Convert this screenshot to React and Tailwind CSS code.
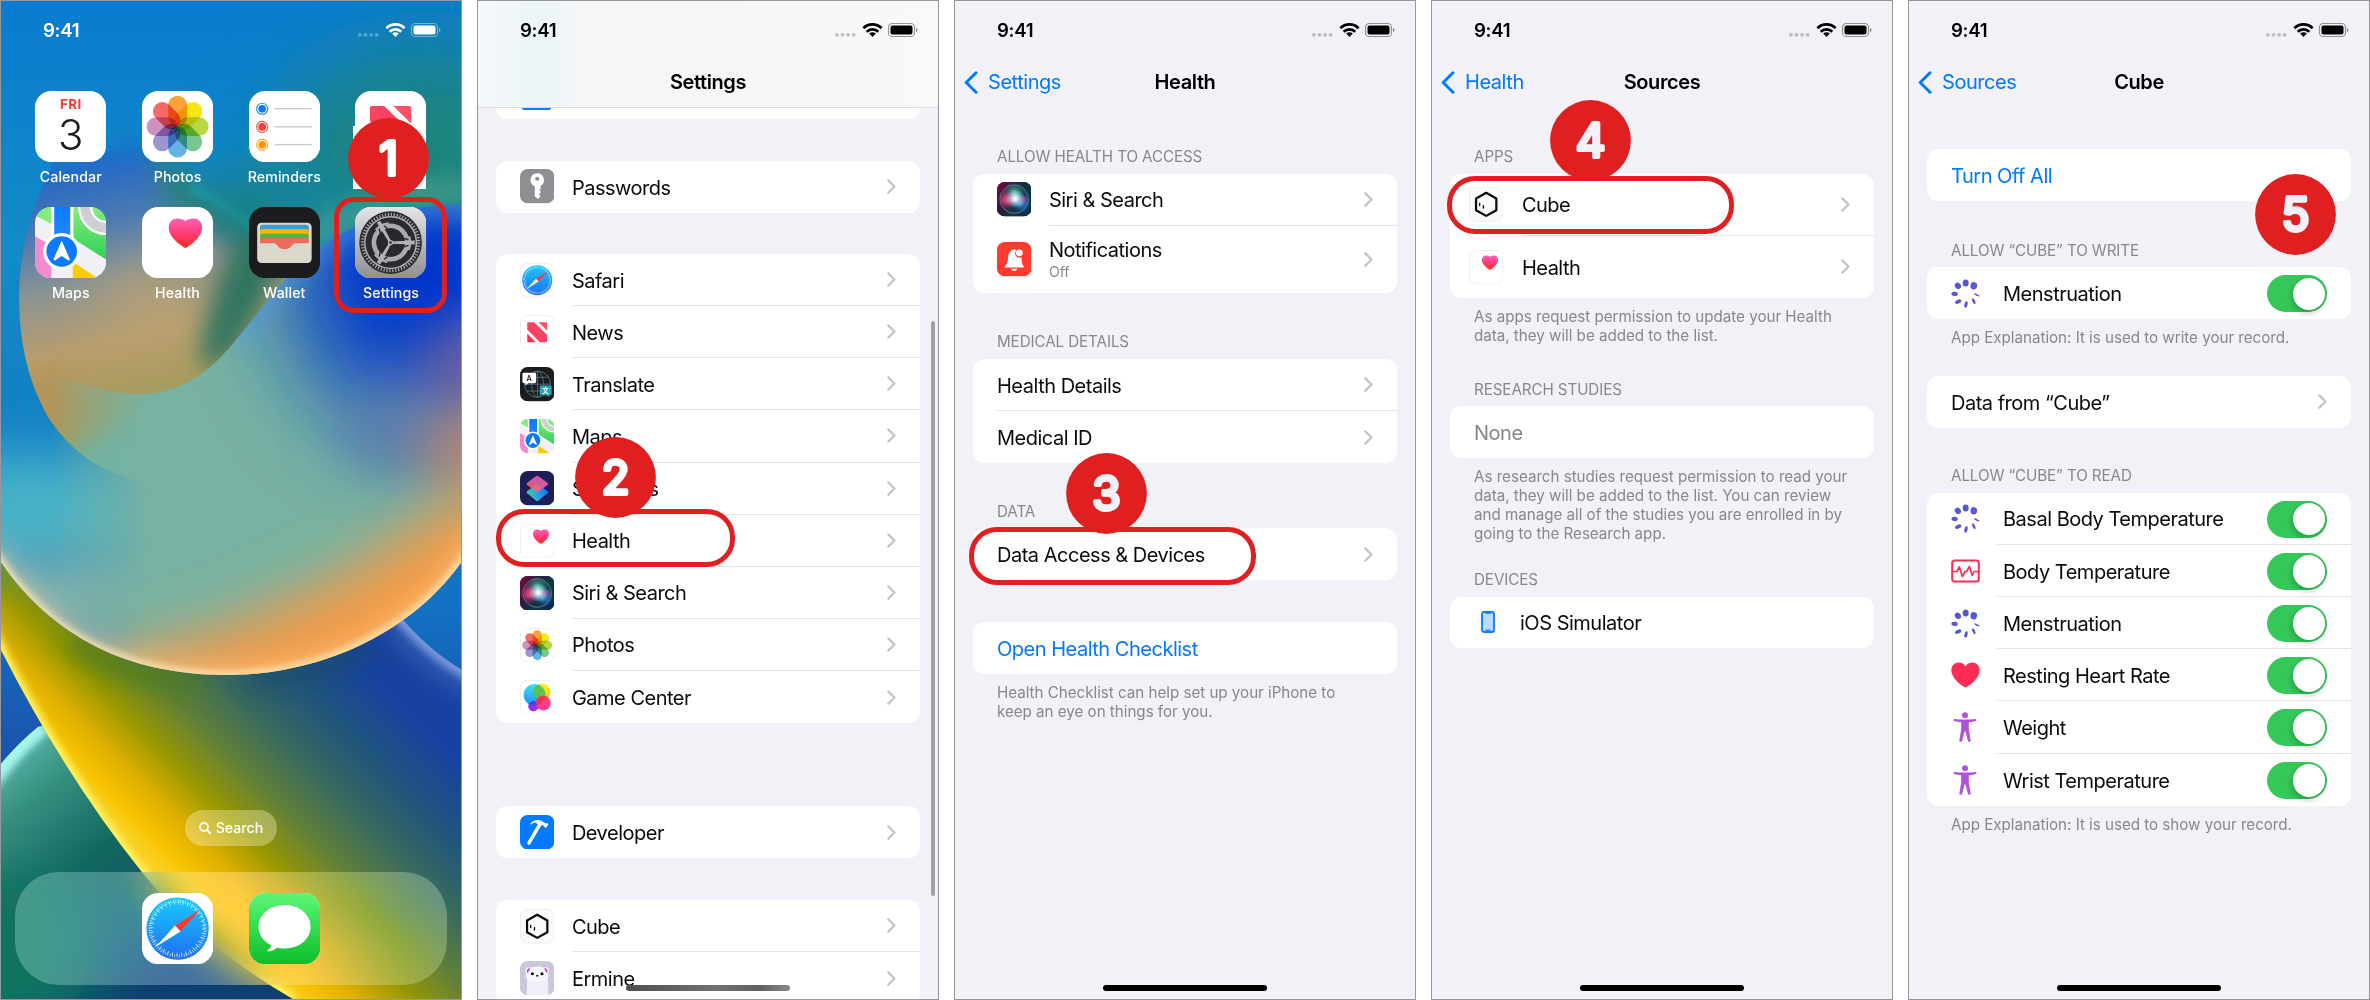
import React from "react";

/* ---------- app icons, drawn on a 100 x 100 grid ---------- */

function Tile({ children, size = "size-[34.4px]", bg = "#fff", outline = false }) {
  return (
    <svg viewBox="0 0 100 100" className={`${size} shrink-0 block`}>
      <defs>
        <clipPath id="tileClip">
          <rect width="100" height="100" rx="22.5" />
        </clipPath>
      </defs>
      <g clipPath="url(#tileClip)">
        <rect width="100" height="100" fill={bg} />
        {children}
      </g>
      {outline && <rect x="1" y="1" width="98" height="98" rx="21.5" fill="none" stroke="#e9e9eb" strokeWidth="2.4" />}
    </svg>
  );
}

const petals = ["#f99c2a", "#f8e300", "#b4d335", "#6cc287", "#57aee2", "#928fcc", "#cb8abb", "#f2605c"];

function PhotosIcon(p) {
  return (
    <Tile {...p}>
      <g className="isolate">
        {petals.map((c, i) => (
          <rect
            key={c}
            x="36.8"
            y="6.5"
            width="26.4"
            height="43.5"
            rx="13.2"
            fill={c}
            fillOpacity="0.93"
            transform={`rotate(${i * 45} 50 50)`}
            className="mix-blend-multiply"
          />
        ))}
      </g>
    </Tile>
  );
}

function NewsIcon(p) {
  return (
    <Tile {...p}>
      <path d="M24 21H41L79 58V75Q79 79 75 79H58L21 42V24Q21 21 24 21Z" fill="#fc4262" />
      <path d="M54 21H76Q79 21 79 24V46Z" fill="#fb5168" />
      <path d="M21 54L46 79H24Q21 79 21 76Z" fill="#fc2f53" />
    </Tile>
  );
}

function MapsIcon(p) {
  return (
    <Tile bg="#f1f0f5" {...p}>
      <defs>
        <linearGradient id="mapGreen" x1="0" y1="0" x2="0" y2="1">
          <stop offset="0" stopColor="#85ec7c" />
          <stop offset="1" stopColor="#2fd158" />
        </linearGradient>
        <linearGradient id="mapBlue" x1="0" y1="0" x2="0" y2="1">
          <stop offset="0" stopColor="#0a7aff" />
          <stop offset="1" stopColor="#2a8cff" />
        </linearGradient>
      </defs>
      <path d="M0 0H23V24L0 12Z" fill="#84eb7c" />
      <path d="M53 0H100V74L53 44Z" fill="url(#mapGreen)" />
      <circle cx="100" cy="0" r="29.5" fill="none" stroke="#fff" strokeWidth="20" />
      <circle cx="100" cy="0" r="29.5" fill="none" stroke="#cfced3" strokeWidth="14" />
      <path d="M0 41L23 54V100H0Z" fill="#f08bcf" />
      <path d="M53 77L88 100H53Z" fill="#fecb06" />
      <rect x="23" width="31" height="60" fill="#fff" />
      <rect x="27" width="22.5" height="60" fill="url(#mapBlue)" />
      <circle cx="37.5" cy="62.5" r="26" fill="#fff" />
      <circle cx="37.5" cy="62.5" r="21.5" fill="#0a7bff" />
      <path d="M37.5 47L49 73.5Q49 75.5 47 75L37.5 69L28 75Q26 75.5 26 73.5Z" fill="#fff" />
    </Tile>
  );
}

function HealthIcon(p) {
  return (
    <Tile {...p}>
      <defs>
        <linearGradient id="heartFill" x1="0" y1="0" x2="0" y2="1">
          <stop offset="0" stopColor="#fd62b5" />
          <stop offset="0.55" stopColor="#fd3a71" />
          <stop offset="1" stopColor="#ff2a17" />
        </linearGradient>
      </defs>
      <path
        d="M61 57.5C57 56 37.5 43 37.5 29C37.5 21 43 16.3 49.5 16.3C54.5 16.3 59 17.5 61 20C63 17.5 67.5 16.3 72.5 16.3C79 16.3 84.5 21 84.5 29C84.5 43 65 56 61 57.5Z"
        fill="url(#heartFill)"
      />
    </Tile>
  );
}

function SafariIcon(p) {
  return (
    <Tile {...p}>
      <defs>
        <linearGradient id="safari" x1="0" y1="0" x2="0" y2="1">
          <stop offset="0" stopColor="#19cbfb" />
          <stop offset="1" stopColor="#1e6ef2" />
        </linearGradient>
      </defs>
      <circle cx="50" cy="50" r="43.8" fill="url(#safari)" />
      <circle cx="50" cy="50" r="38.5" fill="none" stroke="#fff" strokeOpacity="0.75" strokeWidth="4.5" strokeDasharray="1.1 2.26" />
      <circle cx="50" cy="50" r="36.2" fill="none" stroke="#fff" strokeOpacity="0.75" strokeWidth="5" strokeDasharray="1.1 5.218" />
      <path d="M81 24L46.4 45.6L54 54Z" fill="#ff3b30" />
      <path d="M19 76L46.4 45.6L54 54Z" fill="#fff" />
    </Tile>
  );
}

function MessagesIcon(p) {
  return (
    <Tile {...p}>
      <defs>
        <linearGradient id="msg" x1="0" y1="0" x2="0" y2="1">
          <stop offset="0" stopColor="#5df777" />
          <stop offset="1" stopColor="#0cbd2a" />
        </linearGradient>
      </defs>
      <rect width="100" height="100" fill="url(#msg)" />
      <path d="M50 17C70.5 17 86.5 30 86.5 47.5C86.5 65 70.5 78 50 78C46 78 42.5 77.5 39.5 76.8C35.5 80 31 82 26.5 82C25.5 82 25 81.5 26 80.5C29 78.5 31 76 31.2 73.5C20.5 68.5 13.5 59 13.5 47.5C13.5 30 29.5 17 50 17Z" fill="#fff" />
    </Tile>
  );
}

function CalendarIcon() {
  return (
    <div className="flex size-[71px] flex-col items-center rounded-[16px] bg-white">
      <div className="mt-[5px] text-[13.5px] leading-[17px] font-bold tracking-[0.3px] text-[#fd3b30]">FRI</div>
      <div className="text-[42px] leading-[44px] font-light text-[#1d1d1f]">3</div>
    </div>
  );
}

function RemindersIcon(p) {
  const dots = [
    [25, "#0a7bff"],
    [50.5, "#fd3b30"],
    [75.5, "#fd9501"],
  ];
  return (
    <Tile {...p}>
      {dots.map(([y, c]) => (
        <g key={c}>
          <circle cx="18.5" cy={y} r="7.8" fill="none" stroke={c} strokeWidth="1.7" strokeOpacity="0.85" />
          <circle cx="18.5" cy={y} r="5.4" fill={c} />
          <rect x="36" y={y - 1.2} width="52" height="2" fill="#c9c9cf" />
        </g>
      ))}
    </Tile>
  );
}

function WalletIcon(p) {
  return (
    <Tile bg="#1c1c1e" {...p}>
      <rect x="11.5" y="22" width="76.5" height="56.5" rx="6" fill="#dbd8cc" />
      <rect x="15.5" y="25" width="68.5" height="14" rx="4" fill="#3e9bd2" />
      <rect x="15.5" y="31" width="68.5" height="12" rx="4" fill="#fcb00b" />
      <rect x="15.5" y="37.5" width="68.5" height="12" rx="4" fill="#4fb749" />
      <path d="M15.5 47Q15.5 43.5 19.5 43.5H80Q84 43.5 84 47V51H65C60 51 60 59.5 50 59.5C40 59.5 40 51 35 51H15.5Z" fill="#ee6a5c" />
    </Tile>
  );
}

function SettingsIcon(p) {
  return (
    <Tile {...p}>
      <defs>
        <linearGradient id="gearBg" x1="0" y1="0" x2="0" y2="1">
          <stop offset="0" stopColor="#e3e3e8" />
          <stop offset="1" stopColor="#8f8f94" />
        </linearGradient>
      </defs>
      <rect width="100" height="100" fill="url(#gearBg)" />
      <circle cx="50" cy="50" r="44" fill="#2b2b2d" />
      <circle cx="50" cy="50" r="39.5" fill="none" stroke="#b2b2b7" strokeWidth="4.5" strokeDasharray="1.6 2.536" />
      <circle cx="50" cy="50" r="36.2" fill="none" stroke="#b2b2b7" strokeWidth="2" />
      <circle cx="50" cy="50" r="24.5" fill="none" stroke="#a9a9ae" strokeWidth="9" />
      <circle cx="50" cy="50" r="28.3" fill="none" stroke="#2b2b2d" strokeWidth="3.2" strokeDasharray="38 21.27" strokeDashoffset="-11" />
      <circle cx="50" cy="50" r="19.8" fill="#29292b" />
      {[0, 120, 240].map((a) => (
        <g key={a} transform={`rotate(${a} 50 50)`}>
          <path d="M50 48.4L84 47.2V52.8L50 51.6Z" fill="#b2b2b7" />
          <path d="M69 44L75 46M69 56L75 54" stroke="#2b2b2d" strokeWidth="2" />
        </g>
      ))}
      <circle cx="50" cy="50" r="3.8" fill="#b2b2b7" />
      <circle cx="50" cy="50" r="1.8" fill="#2b2b2d" />
    </Tile>
  );
}

function KeyIcon() {
  return (
    <Tile bg="#8e8e93">
      <path
        fillRule="evenodd"
        fill="#fff"
        d="M50 12A20 20 0 0 0 43 50.5V79L52 87L60 79L55 73.5L61 67L56 61L60 57.5V49A20 20 0 0 0 50 12ZM50 22.5A6 6 0 1 1 50 34.5A6 6 0 1 1 50 22.5Z"
      />
    </Tile>
  );
}

function TranslateIcon() {
  return (
    <Tile bg="#1c1c1e">
      <g fill="none" stroke="#4f8490" strokeWidth="2.2">
        <circle cx="51" cy="50" r="38" />
        <ellipse cx="51" cy="50" rx="17" ry="38" />
        <path d="M51 12V88M13 50H89M19 30H83M19 70H83" />
      </g>
      <path d="M12 17H43Q47 17 47 21V43Q47 47 43 47H24L16 54V47H12Q7 47 7 43V21Q7 17 12 17Z" fill="#fff" />
      <path d="M61 54H88Q92 54 92 58V78Q92 82 88 82H85V88L78 82H61Q57 82 57 78V58Q57 54 61 54Z" fill="#2ba1b4" />
      <text x="26.5" y="40" textAnchor="middle" fontSize="21" fontWeight="600" fill="#1c1c1e" fontFamily="Inter">A</text>
      <text x="74.5" y="75.5" textAnchor="middle" fontSize="19" fontWeight="700" fill="#fff" fontFamily="Noto Sans CJK SC">文</text>
    </Tile>
  );
}

function ShortcutsIcon() {
  return (
    <Tile bg="#1b1e59">
      <defs>
        <linearGradient id="scTop" x1="0.2" y1="1" x2="0.7" y2="0">
          <stop offset="0" stopColor="#fb6a5c" />
          <stop offset="1" stopColor="#e85ad0" />
        </linearGradient>
        <linearGradient id="scBottom" x1="0" y1="0.7" x2="1" y2="0.4">
          <stop offset="0" stopColor="#45d29a" />
          <stop offset="0.6" stopColor="#2e93f0" />
          <stop offset="1" stopColor="#0a74f5" />
        </linearGradient>
      </defs>
      <path d="M21 58L46 41Q50 39 54 41L80 58Q84 61.5 80 65L54 86Q50 89 46 86L21 65Q17 61.5 21 58Z" fill="url(#scBottom)" />
      <path d="M21 34L46 15Q50 12 54 15L80 34Q84 38 80 41L54 59Q50 61 46 59L21 41Q17 38 21 34Z" fill="url(#scTop)" fillOpacity="0.88" />
    </Tile>
  );
}

function SiriIcon() {
  return (
    <Tile bg="#171a2c">
      <defs>
        <linearGradient id="siriBg" x1="0" y1="0.2" x2="1" y2="0.8">
          <stop offset="0" stopColor="#6e0f35" />
          <stop offset="0.3" stopColor="#35143f" />
          <stop offset="0.6" stopColor="#0d3640" />
          <stop offset="1" stopColor="#0a2c52" />
        </linearGradient>
        <radialGradient id="siriGlow">
          <stop offset="0" stopColor="#fff" />
          <stop offset="0.25" stopColor="#e6f4fb" stopOpacity="0.9" />
          <stop offset="1" stopColor="#7fd6e0" stopOpacity="0" />
        </radialGradient>
        <radialGradient id="siriPink">
          <stop offset="0" stopColor="#f0508a" />
          <stop offset="1" stopColor="#c0306c" stopOpacity="0" />
        </radialGradient>
        <radialGradient id="siriGreen">
          <stop offset="0" stopColor="#38c79a" />
          <stop offset="1" stopColor="#1a9a7a" stopOpacity="0" />
        </radialGradient>
        <radialGradient id="siriBlue">
          <stop offset="0" stopColor="#44a8ff" />
          <stop offset="1" stopColor="#1f55c8" stopOpacity="0" />
        </radialGradient>
      </defs>
      <rect width="100" height="100" fill="url(#siriBg)" />
      <circle cx="50" cy="32" r="34" fill="url(#siriGreen)" />
      <circle cx="30" cy="52" r="30" fill="url(#siriPink)" />
      <circle cx="70" cy="60" r="30" fill="url(#siriBlue)" />
      <path d="M14 52C18 30 36 34 50 50S84 66 86 50S66 42 50 52S16 74 14 52Z" fill="#e2477f" fillOpacity="0.45" />
      <circle cx="53" cy="48" r="28" fill="url(#siriGlow)" />
      <path d="M45 48L78 80L52 56Z" fill="#fff" fillOpacity="0.7" />
      <circle cx="50" cy="50" r="41.5" fill="none" stroke="#6fb5b8" strokeOpacity="0.7" strokeWidth="2.2" />
      <circle cx="51" cy="52" r="37.5" fill="none" stroke="#b36aa0" strokeOpacity="0.45" strokeWidth="1.8" />
    </Tile>
  );
}

function GameCenterIcon() {
  return (
    <Tile outline>
      <defs>
        <linearGradient id="gcBlue" x1="0" y1="0" x2="0" y2="1">
          <stop offset="0" stopColor="#3ee0fb" />
          <stop offset="1" stopColor="#1f8ef5" />
        </linearGradient>
        <linearGradient id="gcYellow" x1="0" y1="0" x2="0" y2="1">
          <stop offset="0" stopColor="#fdf21c" />
          <stop offset="1" stopColor="#fbc108" />
        </linearGradient>
        <linearGradient id="gcPink" x1="0" y1="0" x2="0" y2="1">
          <stop offset="0" stopColor="#fb3f5c" />
          <stop offset="1" stopColor="#fd2f93" />
        </linearGradient>
        <clipPath id="gcClip">
          <circle cx="42" cy="43" r="31.5" />
        </clipPath>
      </defs>
      <circle cx="39" cy="76" r="15" fill="#9a2cf5" />
      <circle cx="64" cy="35" r="25" fill="url(#gcYellow)" />
      <circle cx="42" cy="43" r="31.5" fill="url(#gcBlue)" />
      <g clipPath="url(#gcClip)">
        <circle cx="64" cy="35" r="25" fill="#5cc04e" />
        <circle cx="39" cy="76" r="15" fill="#4a3df0" />
      </g>
      <circle cx="68" cy="67" r="21.5" fill="url(#gcPink)" fillOpacity="0.96" />
      <g clipPath="url(#gcClip)">
        <circle cx="68" cy="67" r="21.5" fill="#e8294a" fillOpacity="0.6" />
      </g>
    </Tile>
  );
}

function HammerIcon() {
  return (
    <Tile bg="#007aff">
      <path
        fill="#fff"
        d="M30 25C37 15 50 12 60 16L71 21.5C74 24 76 25 81 24L82 28L76 37L70 35L67.5 30C65 28 63 29 61.5 31.5L30 84Q27 88 23.5 85.5Q19.5 83 21.5 79L51.5 27.5C47 20.5 38 21 32.5 28Z"
      />
    </Tile>
  );
}

function CubeIcon() {
  return (
    <Tile bg="#fafafa" outline>
      <path d="M50 17L79.5 33.5V67.5L50 84L20.5 67.5V33.5Z" fill="none" stroke="#0a0a0a" strokeWidth="6.5" strokeLinejoin="round" />
      <path d="M31 48V54M42 54V61" stroke="#0a0a0a" strokeWidth="4" strokeLinecap="round" />
    </Tile>
  );
}

function ErmineIcon() {
  return (
    <Tile bg="#cbc6dc">
      <path d="M19 100L21 50H81L83 100Z" fill="#f0eef6" />
      <ellipse cx="25" cy="28" rx="9" ry="10" fill="#f6f4fa" />
      <ellipse cx="75" cy="28" rx="9" ry="10" fill="#f6f4fa" />
      <path d="M50 16C70 16 80 26 82 40C83 56 70 60 50 60C30 60 17 56 18 40C20 26 30 16 50 16Z" fill="#f8f7fc" />
      <path d="M21 35Q17 21 30 21L24 33Z" fill="#a44de0" />
      <path d="M79 35Q83 21 70 21L76 33Z" fill="#a44de0" />
      <circle cx="36" cy="37" r="4.5" fill="#111" />
      <circle cx="64" cy="37" r="4.5" fill="#111" />
      <ellipse cx="50" cy="43" rx="3.5" ry="2.8" fill="#222" />
      <path d="M12 42H19M12 48H20M81 42H88M80 48H88" stroke="#f2f0f8" strokeWidth="1.5" />
    </Tile>
  );
}

function BellIcon() {
  return (
    <Tile bg="#ff3b30">
      <path d="M22 71Q31 65 32 47C32.5 31 39 23 50 21Q55 21 56 24Q50 31 54 39Q60 48 71 45Q71 63 78 71Q79 74 75 74H25Q21 74 22 71Z" fill="#fff" />
      <path d="M41 77.5H59Q56 84 50 84Q44 84 41 77.5Z" fill="#fff" />
      <circle cx="65" cy="31.500" r="10" fill="#fff" />
    </Tile>
  );
}

/* ---------- health category glyphs ---------- */

function CycleGlyph() {
  const drops = [
    [14.7, 4, 3, 3.6, 0],
    [22.8, 6.8, 3.3, 3.7, 10],
    [25.8, 15.9, 3, 0.8, 25],
    [22.8, 22.3, 1.3, 3.2, -25],
    [15, 25.5, 1.6, 3.2, 12],
    [7.2, 22.6, 3.3, 1.9, -25],
    [3.6, 14.9, 3.2, 2.2, 5],
    [6.9, 6.8, 2.9, 3.4, -35],
  ];
  return (
    <svg viewBox="0 0 29 29" className="size-[29px] overflow-visible">
      {drops.map(([x, y, rx, ry, a]) => (
        <ellipse key={x + "-" + y} cx={x} cy={y} rx={rx} ry={ry} fill="#5856d6" transform={`rotate(${a} ${x} ${y})`} />
      ))}
    </svg>
  );
}

function VitalsGlyph() {
  return (
    <svg viewBox="0 0 29 24" className="h-[24px] w-[29px]" fill="none" stroke="#ff2d55">
      <rect x="1.2" y="1.5" width="26.6" height="21" rx="2.5" strokeWidth="2" />
      <path d="M2 12.5H6L8.3 8L11.3 17.5L14 12.5H15.5L18.5 7.5L21.2 16.5L23 12.5H27" strokeWidth="1.7" strokeLinejoin="round" />
    </svg>
  );
}

function HeartGlyph() {
  return (
    <svg viewBox="0 0 29 26" className="h-[26px] w-[29px]">
      <path d="M14.5 25.5C12.5 25 0.4 17 0.4 8.2C0.4 3.5 3.7 0.5 7.7 0.5C10.7 0.5 13.2 2 14.5 4.6C15.8 2 18.3 0.5 21.3 0.5C25.3 0.5 28.6 3.5 28.6 8.2C28.6 17 16.5 25 14.5 25.5Z" fill="#ff2d55" />
    </svg>
  );
}

function BodyGlyph() {
  return (
    <svg viewBox="0 0 24 30" className="h-[30px] w-[24px]" fill="#af52de">
      <circle cx="12" cy="3.2" r="3" />
      <path d="M1.3 6.9Q12 8.3 22.7 6.9Q23.8 7.2 23.4 8.7Q20 10 15.8 10.3V17.5L17.7 28.5Q17.7 30 15.7 29.8L15 29.2L12.5 19.5H11.5L9 29.2L8.3 29.8Q6.3 30 6.3 28.5L8.2 17.5V10.3Q4 10 0.6 8.7Q0.2 7.2 1.3 6.9Z" />
    </svg>
  );
}

function PhoneGlyph() {
  return (
    <svg viewBox="0 0 14 22" className="h-[22px] w-[14px]">
      <rect x="1" y="1" width="12" height="20" rx="2" fill="#b9dbff" stroke="#0a7bff" strokeWidth="1.8" />
      <path d="M4.5 2.2H9.5M4.5 19.2H9.5" stroke="#0a7bff" strokeWidth="1.3" />
    </svg>
  );
}

/* ---------- shared chrome ---------- */

function Chevron() {
  return (
    <svg viewBox="0 0 9 15" className="h-[15px] w-[9px] shrink-0" fill="none" stroke="#c4c4c7" strokeWidth="2.3" strokeLinecap="round" strokeLinejoin="round">
      <path d="M1.3 1.4L7.5 7.5L1.3 13.6" />
    </svg>
  );
}

function StatusBar({ light }) {
  const c = light ? "#fff" : "#000";
  return (
    <div className={light ? "flex h-[58px] items-center text-white" : "flex h-[58px] items-center text-black"}>
      <span className="ml-[42px] text-[18.6px] leading-[20px] font-semibold tracking-[-0.3px]">9:41</span>
      <svg viewBox="0 0 83 16" className="mr-[20px] ml-auto h-[16px] w-[83px]">
        {[1.9, 7.5, 13.1, 18.7].map((x) => (
          <circle key={x} cx={x} cy="12.8" r="1.9" fill={light ? "#fff" : "#000"} fillOpacity={light ? 0.3 : 0.22} />
        ))}
        <g fill="none" stroke={c} strokeWidth="2.7">
          <path d="M28.4 6.2C33.5 1.1 41.5 1.1 46.6 6.2" />
          <path d="M31.7 9.7C34.9 6.5 40.1 6.5 43.3 9.7" />
        </g>
        <path d="M34.2 11.5C36.2 9.8 38.8 9.8 40.8 11.5L37.5 15Z" fill={c} />
        <rect x="53.5" y="1.5" width="26" height="13" rx="3.8" fill="none" stroke={c} strokeOpacity="0.4" strokeWidth="1.2" />
        <rect x="55.5" y="3.5" width="22" height="9" rx="2" fill={c} />
        <path d="M81 6C83 6.7 83 9.3 81 10Z" fill={c} fillOpacity="0.45" />
      </svg>
    </div>
  );
}

function NavBar({ back, title }) {
  return (
    <div className="grid h-[46px] grid-cols-[1fr_auto_1fr] items-center text-[20px] leading-[24px]">
      <div className="flex items-center text-[#007aff]">
        {back && (
          <>
            <svg viewBox="0 0 14 23" className="ml-[9px] h-[23px] w-[14px]" fill="none" stroke="#007aff" strokeWidth="3" strokeLinecap="round" strokeLinejoin="round">
              <path d="M12 1.8L2.2 11.500L12 21.2" />
            </svg>
            <span className="ml-[10px] tracking-[-0.45px]">{back}</span>
          </>
        )}
      </div>
      <div className="font-semibold tracking-[-0.4px] text-black">{title}</div>
      <div />
    </div>
  );
}

function HomeIndicator() {
  return <div className="absolute bottom-[8px] left-[148px] h-[6px] w-[164px] rounded-full bg-black" />;
}

function Panel({ children }) {
  return (
    <section className="relative flex h-[1000px] w-[462px] shrink-0 flex-col overflow-hidden border border-[#98989c] bg-[#f2f1f7]">
      {children}
    </section>
  );
}

function Card({ className = "", children }) {
  return <div className={`mx-[18px] shrink-0 overflow-hidden rounded-[11.5px] bg-white ${className}`}>{children}</div>;
}

function GroupLabel({ className = "", children }) {
  return <div className={`ml-[42px] h-[19px] shrink-0 text-[15.2px] leading-[19px] tracking-[-0.1px] text-[#87878c] ${className}`}>{children}</div>;
}

function GroupNote({ className = "", children }) {
  return <div className={`ml-[42px] shrink-0 text-[15.2px] leading-[19px] tracking-[-0.03px] whitespace-pre text-[#87878c] ${className}`}>{children}</div>;
}

const label = "pt-[2px] text-[20px] leading-[24px] tracking-[-0.49px]";

function IconRow({ icon, text, sub, last }) {
  return (
    <div className={sub ? "flex h-[67.4px] items-center pl-[24px]" : "flex h-[52.13px] items-center pl-[24px]"}>
      {icon}
      <div
        className={
          last
            ? "ml-[17.5px] flex h-full flex-1 items-center pr-[24px]"
            : "ml-[17.5px] flex h-full flex-1 items-center border-b border-[#e3e3e6] pr-[24px]"
        }
      >
        <div className="flex-1">
          <div className={`${label} text-[#0b0b0c]`}>{text}</div>
          {sub && <div className="text-[14.2px] leading-[20px] tracking-[-0.1px] text-[#8a8a8e]">{sub}</div>}
        </div>
        <Chevron />
      </div>
    </div>
  );
}

function TextRow({ text, tone = "text-[#0b0b0c]", chevron, divider }) {
  return (
    <div className="h-[52.13px] pl-[24px]">
      <div className={divider ? "flex h-full items-center justify-between border-b border-[#e3e3e6] pr-[24px]" : "flex h-full items-center justify-between pr-[24px]"}>
        <span className={`${label} ${tone}`}>{text}</span>
        {chevron && <Chevron />}
      </div>
    </div>
  );
}

function Switch() {
  return (
    <div className="mt-[1.5px] flex h-[37px] w-[60.5px] shrink-0 items-center justify-end rounded-full bg-[#34c759] pr-[2px]">
      <div className="size-[32.5px] rounded-full bg-white shadow-[-1px_3px_6px_rgba(0,0,0,0.22)]" />
    </div>
  );
}

function SwitchRow({ glyph, text, last }) {
  return (
    <div className="flex h-[52.13px] items-center pl-[23px]">
      <div className="flex w-[30px] justify-center">{glyph}</div>
      <div
        className={
          last
            ? "ml-[17px] flex h-full flex-1 items-center justify-between pr-[24px] pl-[6px]"
            : "ml-[17px] flex h-full flex-1 items-center justify-between border-b border-[#e3e3e6] pr-[24px] pl-[6px]"
        }
      >
        <span className={`${label} text-[#0b0b0c]`}>{text}</span>
        <Switch />
      </div>
    </div>
  );
}

/* Numbered step marker: disc with a round-cornered numeral */
function Step({ n, place, fill }) {
  return (
    <svg viewBox="0 0 81 81" className={`absolute size-[81px] ${place}`}>
      <circle cx="40.5" cy="40.5" r="40.4" fill="#e02020" />
      <text x="40.5" y="57.2" textAnchor="middle" fontFamily="Inter" fontWeight="400" fontSize="46" fill={fill} stroke={fill} strokeWidth="4" strokeLinejoin="round" strokeLinecap="round">
        {n}
      </text>
    </svg>
  );
}

/* ---------- home screen ---------- */

function Wallpaper() {
  const arc = "M-10 -10H480V530C440 615 340 675 225 675C120 675 40 630 -10 545Z";
  const rim = "M-10 545C40 630 120 675 225 675C340 675 440 615 480 530";
  const swirl = "M480 204C420 203 370 214 325 244C285 272 262 310 238 337C210 375 175 394 143 394C110 394 85 384 55 376L-10 360V720H480Z";
  return (
    <svg viewBox="1 1 460 998" className="absolute inset-0 h-full w-full" preserveAspectRatio="none">
      <defs>
        <filter id="b60" filterUnits="userSpaceOnUse" x="-200" y="-200" width="900" height="1400"><feGaussianBlur stdDeviation="45" /></filter>
        <filter id="b30" filterUnits="userSpaceOnUse" x="-200" y="-200" width="900" height="1400"><feGaussianBlur stdDeviation="28" /></filter>
        <filter id="b12" filterUnits="userSpaceOnUse" x="-200" y="-200" width="900" height="1400"><feGaussianBlur stdDeviation="12" /></filter>
        <filter id="b4" filterUnits="userSpaceOnUse" x="-200" y="-200" width="900" height="1400"><feGaussianBlur stdDeviation="3.5" /></filter>
        <clipPath id="arcClip"><path d={arc} /></clipPath>
        <clipPath id="swirlClip"><path d={swirl} /></clipPath>
        <clipPath id="ballClip"><path d="M-10 778Q12 748 38 727L60 720L320 1010H-10Z" /></clipPath>
        <clipPath id="bandClip"><path d="M-10 628Q60 770 142 872Q200 945 293 999H480V680Q430 655 395 610L200 540H-10Z" /></clipPath>
        <clipPath id="tailClip"><path d="M100 80C75 115 62 143 53 163C32 205 19 250 19 300C20 350 30 385 50 420C78 460 110 475 150 484L300 500V80Z" /></clipPath>
        <linearGradient id="sky" gradientUnits="userSpaceOnUse" x1="0" y1="0" x2="0" y2="1000">
          <stop offset="0" stopColor="#0a7bcf" />
          <stop offset="0.25" stopColor="#128bc6" />
          <stop offset="0.42" stopColor="#1180c4" />
          <stop offset="0.6" stopColor="#1372c2" />
          <stop offset="0.76" stopColor="#1b52ac" />
        </linearGradient>
        <linearGradient id="band" gradientUnits="userSpaceOnUse" x1="100" y1="807" x2="301.5" y2="605.5">
          <stop offset="0" stopColor="#f9d020" />
          <stop offset="0.06" stopColor="#f7c200" />
          <stop offset="0.16" stopColor="#dfb000" />
          <stop offset="0.3" stopColor="#959700" />
          <stop offset="0.45" stopColor="#62803a" />
          <stop offset="0.62" stopColor="#38695e" />
          <stop offset="0.8" stopColor="#20557c" />
          <stop offset="1" stopColor="#17429f" />
        </linearGradient>
        <linearGradient id="ball" gradientUnits="userSpaceOnUse" x1="10" y1="740" x2="190" y2="960">
          <stop offset="0" stopColor="#5cb8ac" />
          <stop offset="0.22" stopColor="#358f80" />
          <stop offset="0.5" stopColor="#12685f" />
          <stop offset="0.75" stopColor="#11586a" />
          <stop offset="1" stopColor="#0f3f70" />
        </linearGradient>
        <linearGradient id="fadeIn" gradientUnits="userSpaceOnUse" x1="50" y1="0" x2="150" y2="0">
          <stop offset="0" stopColor="#000" />
          <stop offset="1" stopColor="#fff" />
        </linearGradient>
        <mask id="leftFade" maskUnits="userSpaceOnUse" x="0" y="0" width="480" height="1000">
          <rect width="480" height="1000" fill="url(#fadeIn)" />
        </mask>
        <mask id="tailFade" maskUnits="userSpaceOnUse" x="0" y="0" width="480" height="1000">
          <path d="M-50 185L150 145Q210 190 240 225L300 260V560H-50Z" fill="#fff" filter="url(#b12)" />
        </mask>
        <linearGradient id="tailFill" gradientUnits="userSpaceOnUse" x1="75" y1="165" x2="130" y2="395">
          <stop offset="0" stopColor="#2266c8" />
          <stop offset="0.25" stopColor="#4a7ab2" />
          <stop offset="0.5" stopColor="#8c9492" />
          <stop offset="0.76" stopColor="#b99e6e" />
          <stop offset="1" stopColor="#a99a5c" />
        </linearGradient>
      </defs>

      <rect width="470" height="1000" fill="url(#sky)" />

      <g clipPath="url(#ballClip)">
        <rect x="-10" y="700" width="400" height="310" fill="url(#ball)" />
        <ellipse cx="10" cy="960" rx="80" ry="70" fill="#0c7560" filter="url(#b30)" />
        <path d="M-10 780Q12 748 42 724" fill="none" stroke="#a6f5ee" strokeWidth="22" filter="url(#b4)" />
      </g>

      <g clipPath="url(#bandClip)">
        <rect x="-10" y="500" width="500" height="510" fill="url(#band)" />
        <ellipse cx="10" cy="560" rx="50" ry="26" fill="#6e9438" filter="url(#b12)" />
        <path d="M70 640Q120 675 200 685" fill="none" stroke="#4b7a18" strokeWidth="18" filter="url(#b12)" />
        <path d="M250 680Q320 672 370 645" fill="none" stroke="#1f4c66" strokeWidth="16" filter="url(#b12)" />
        <path d="M-10 628Q60 770 142 872Q200 945 293 999" fill="none" stroke="#fff46a" strokeWidth="10" filter="url(#b4)" />
        <path d="M480 680Q430 655 395 610" fill="none" stroke="#a9bff2" strokeWidth="13" filter="url(#b4)" />
        <path d="M480 680Q430 655 395 610" fill="none" stroke="#4a70c4" strokeWidth="34" strokeOpacity="0.6" filter="url(#b12)" />
      </g>

      <g clipPath="url(#arcClip)">
        <rect width="470" height="700" fill="url(#sky)" />
        <ellipse cx="430" cy="150" rx="150" ry="100" fill="#1c837c" filter="url(#b60)" />
        <ellipse cx="250" cy="215" rx="60" ry="40" fill="#1f8080" filter="url(#b30)" />
        <ellipse cx="30" cy="510" rx="150" ry="56" fill="#48b4c8" filter="url(#b30)" />
        <ellipse cx="70" cy="600" rx="150" ry="40" fill="#8ab8ac" filter="url(#b30)" />

        <g mask="url(#tailFade)">
          <g clipPath="url(#tailClip)">
            <rect width="320" height="510" fill="url(#tailFill)" />
            <path d="M150 130L280 190V270Q210 240 165 200Z" fill="#2b807c" filter="url(#b12)" />
            <ellipse cx="244" cy="285" rx="26" ry="90" fill="#2f7560" filter="url(#b12)" transform="rotate(24 244 285)" />
            <path d="M190 188C215 196 240 212 262 236" fill="none" stroke="#1fa898" strokeWidth="8" filter="url(#b4)" />
            <ellipse cx="150" cy="305" rx="40" ry="30" fill="#bba272" filter="url(#b30)" />
            <ellipse cx="50" cy="395" rx="28" ry="30" fill="#b3945a" filter="url(#b12)" />
            <path d="M60 460L170 395V500H60Z" fill="#6cb3a4" filter="url(#b12)" />
          </g>
        </g>

        <path d="M470 190C410 190 360 205 310 240" fill="none" stroke="#5fae88" strokeWidth="22" strokeOpacity="0.6" filter="url(#b12)" />

        <g mask="url(#leftFade)">
          <g clipPath="url(#swirlClip)">
            <rect y="190" width="480" height="500" fill="#78b2a2" />
            <path d="M270 300L330 200H500V400L400 440L330 400Z" fill="#1750c4" filter="url(#b60)" />
            <path d="M330 270L370 210H500V320L390 340Z" fill="#0036cc" filter="url(#b30)" />
            <ellipse cx="400" cy="430" rx="60" ry="40" fill="#5c7fae" filter="url(#b30)" />
            <ellipse cx="490" cy="365" rx="70" ry="40" fill="#6e56a0" filter="url(#b30)" />
            <ellipse cx="490" cy="450" rx="70" ry="45" fill="#b87f74" filter="url(#b30)" />
            <path d="M480 203C420 203 370 214 325 244C285 272 262 310 238 337" fill="none" stroke="#4b93f5" strokeWidth="12" strokeOpacity="0.8" filter="url(#b12)" />
          </g>
        </g>
        <path d="M90 720L110 660L230 625L340 575L500 470V740H90Z" fill="#ee9c4c" filter="url(#b30)" />
        <path d="M210 720L240 670L340 635L430 570L500 500V740H210Z" fill="#f59b45" filter="url(#b12)" />
        <path d={rim} fill="none" stroke="#ffd49a" strokeWidth="18" strokeOpacity="0.5" filter="url(#b12)" />
        <path d={rim} fill="none" stroke="#ffe7b4" strokeWidth="7" filter="url(#b4)" />
      </g>
    </svg>
  );
}

const big = "size-[71.2px]";

function HomeApp({ icon, name }) {
  return (
    <div className="flex w-[106.6px] flex-col items-center">
      {icon}
      <div className="mt-[5.5px] h-[18px] text-[14.2px] leading-[18px] font-medium tracking-[0.1px] text-white">{name}</div>
    </div>
  );
}

function HomeScreen() {
  return (
    <Panel>
      <Wallpaper />
      <div className="relative flex h-full flex-col">
        <StatusBar light />
        <div className="mt-[32px] ml-[16.5px] grid w-[427px] grid-cols-4 gap-y-[21.5px]">
          <HomeApp icon={<CalendarIcon />} name="Calendar" />
          <HomeApp icon={<PhotosIcon size={big} />} name="Photos" />
          <HomeApp icon={<RemindersIcon size={big} />} name="Reminders" />
          <HomeApp icon={<NewsIcon size={big} />} />
          <HomeApp icon={<MapsIcon size={big} />} name="Maps" />
          <HomeApp icon={<HealthIcon size={big} />} name="Health" />
          <HomeApp icon={<WalletIcon size={big} />} name="Wallet" />
          <HomeApp icon={<SettingsIcon size={big} />} name="Settings" />
        </div>
        <div className="mx-auto mt-auto mb-[26px] flex h-[36px] w-[92px] items-center justify-center gap-[5px] rounded-full bg-[#fff9c8]/35 text-[14.2px] font-medium text-white">
          <svg viewBox="0 0 12 12" className="size-[12px]" fill="none" stroke="#fff" strokeWidth="1.8" strokeLinecap="round">
            <circle cx="5" cy="5" r="4" />
            <path d="M8 8L11 11" />
          </svg>
          Search
        </div>
        <div className="mx-[14px] mb-[14px] flex h-[113.5px] shrink-0 items-center justify-center gap-[35.4px] rounded-[44px] bg-white/25 backdrop-blur-[22px] backdrop-saturate-150">
          <SafariIcon size={big} />
          <MessagesIcon size={big} />
        </div>
      </div>
      <div className="absolute top-[125px] left-[352px] h-[63px] w-[73px] bg-white" />
      <div className="absolute top-[196px] left-[333px] h-[116px] w-[113px] rounded-[20px] border-5 border-[#e02020]" />
      <Step n="1" place="top-[117px] left-[347px]" fill="#fff" />
    </Panel>
  );
}

/* ---------- settings screens ---------- */

function SettingsScreen() {
  return (
    <Panel>
      <div className="h-[107px] shrink-0 border-b border-[#dcdce0] bg-[linear-gradient(90deg,#f5f9fa_0%,#ebf4f8_14%,#f5f6f7_22%,#f6f6f7_50%,#f7f8f7_85%,#f7faf8_100%)]">
        <StatusBar />
        <NavBar title="Settings" />
      </div>
      <div className="mx-[18px] h-[10.5px] shrink-0 rounded-b-[11.5px] bg-white pl-[26px]">
        <div className="h-[1.5px] w-[29px] rounded-b-[4px] bg-[#0a7bff]" />
      </div>
      <Card className="mt-[42px]">
        <IconRow icon={<KeyIcon />} text="Passwords" last />
      </Card>
      <Card className="mt-[41.4px]">
        <IconRow icon={<SafariIcon outline />} text="Safari" />
        <IconRow icon={<NewsIcon outline />} text="News" />
        <IconRow icon={<TranslateIcon />} text="Translate" />
        <IconRow icon={<MapsIcon />} text="Maps" />
        <IconRow icon={<ShortcutsIcon />} text="Shortcuts" />
        <IconRow icon={<HealthIcon outline />} text="Health" />
        <IconRow icon={<SiriIcon />} text="Siri & Search" />
        <IconRow icon={<PhotosIcon outline />} text="Photos" />
        <IconRow icon={<GameCenterIcon />} text="Game Center" last />
      </Card>
      <Card className="mt-[83px]">
        <IconRow icon={<HammerIcon />} text="Developer" last />
      </Card>
      <Card className="mt-[42px]">
        <IconRow icon={<CubeIcon />} text="Cube" />
        <IconRow icon={<ErmineIcon />} text="Ermine" last />
      </Card>
      <div className="absolute top-[320px] right-[3px] h-[575px] w-[4px] rounded-full bg-[#a0a0a5]" />
      <div className="absolute bottom-[8px] left-[148px] h-[6px] w-[164px] rounded-full bg-[linear-gradient(90deg,#505052_0%,#707072_55%,#606062_82%,#8c8c8e_100%)]" />
      <div className="absolute top-[508px] left-[18px] h-[58px] w-[239px] rounded-[28px] border-5 border-[#e02020]" />
      <Step n="2" place="top-[436px] left-[97px]" fill="#fff" />
    </Panel>
  );
}

function HealthScreen() {
  return (
    <Panel>
      <StatusBar />
      <NavBar back="Settings" title="Health" />
      <GroupLabel className="mt-[41.5px] mb-[8px]">ALLOW HEALTH TO ACCESS</GroupLabel>
      <Card>
        <IconRow icon={<SiriIcon />} text="Siri & Search" />
        <IconRow icon={<BellIcon />} text="Notifications" sub="Off" last />
      </Card>
      <GroupLabel className="mt-[39px] mb-[8px]">MEDICAL DETAILS</GroupLabel>
      <Card>
        <TextRow text="Health Details" chevron divider />
        <TextRow text="Medical ID" chevron />
      </Card>
      <GroupLabel className="mt-[38.5px] mb-[7.5px]">DATA</GroupLabel>
      <Card>
        <TextRow text="Data Access & Devices" chevron />
      </Card>
      <Card className="mt-[41.6px]">
        <TextRow text="Open Health Checklist" tone="text-[#007aff]" />
      </Card>
      <GroupNote className="mt-[8.5px]">{"Health Checklist can help set up your iPhone to\nkeep an eye on things for you."}</GroupNote>
      <HomeIndicator />
      <div className="absolute top-[526px] left-[14px] h-[58px] w-[287px] rounded-[28px] border-5 border-[#e02020]" />
      <Step n="3" place="top-[452px] left-[111px]" fill="#f2f1f7" />
    </Panel>
  );
}

function SourceRow({ icon, text, last }) {
  return (
    <div className="flex h-[62.2px] items-center pl-[19px]">
      {icon}
      <div
        className={
          last
            ? "ml-[18.5px] flex h-full flex-1 items-center justify-between pr-[24px]"
            : "ml-[18.5px] flex h-full flex-1 items-center justify-between border-b border-[#e3e3e6] pr-[24px]"
        }
      >
        <span className={`${label} text-[#0b0b0c]`}>{text}</span>
        <Chevron />
      </div>
    </div>
  );
}

function SourcesScreen() {
  return (
    <Panel>
      <StatusBar />
      <NavBar back="Health" title="Sources" />
      <GroupLabel className="mt-[41.5px] mb-[8px]">APPS</GroupLabel>
      <Card>
        <SourceRow icon={<CubeIcon />} text="Cube" />
        <SourceRow icon={<HealthIcon outline />} text="Health" last />
      </Card>
      <GroupNote className="mt-[9px]">{"As apps request permission to update your Health\ndata, they will be added to the list."}</GroupNote>
      <GroupLabel className="mt-[34.7px] mb-[7.5px]">RESEARCH STUDIES</GroupLabel>
      <Card>
        <TextRow text="None" tone="text-[#87878b]" />
      </Card>
      <GroupNote className="mt-[9px]">
        {"As research studies request permission to read your\ndata, they will be added to the list. You can review\nand manage all of the studies you are enrolled in by\ngoing to the Research app."}
      </GroupNote>
      <GroupLabel className="mt-[26.5px] mb-[8px]">DEVICES</GroupLabel>
      <Card>
        <div className="flex h-[51.5px] items-center pl-[31px]">
          <PhoneGlyph />
          <span className={`${label} ml-[25px] text-[#0b0b0c]`}>iOS Simulator</span>
        </div>
      </Card>
      <HomeIndicator />
      <div className="absolute top-[175px] left-[15px] h-[58px] w-[287px] rounded-[28px] border-5 border-[#e02020]" />
      <Step n="4" place="top-[99px] left-[118px]" fill="#f2f1f7" />
    </Panel>
  );
}

function CubeScreen() {
  return (
    <Panel>
      <StatusBar />
      <NavBar back="Sources" title="Cube" />
      <Card className="mt-[44px]">
        <TextRow text="Turn Off All" tone="text-[#007aff]" />
      </Card>
      <GroupLabel className="mt-[39.5px] mb-[7.5px]">ALLOW “CUBE” TO WRITE</GroupLabel>
      <Card>
        <SwitchRow glyph={<CycleGlyph />} text="Menstruation" last />
      </Card>
      <GroupNote className="mt-[9px]">App Explanation: It is used to write your record.</GroupNote>
      <Card className="mt-[28.5px]">
        <TextRow text="Data from “Cube”" chevron />
      </Card>
      <GroupLabel className="mt-[38.5px] mb-[7.5px]">ALLOW “CUBE” TO READ</GroupLabel>
      <Card>
        <SwitchRow glyph={<CycleGlyph />} text="Basal Body Temperature" />
        <SwitchRow glyph={<VitalsGlyph />} text="Body Temperature" />
        <SwitchRow glyph={<CycleGlyph />} text="Menstruation" />
        <SwitchRow glyph={<HeartGlyph />} text="Resting Heart Rate" />
        <SwitchRow glyph={<BodyGlyph />} text="Weight" />
        <SwitchRow glyph={<BodyGlyph />} text="Wrist Temperature" last />
      </Card>
      <GroupNote className="mt-[9px]">App Explanation: It is used to show your record.</GroupNote>
      <HomeIndicator />
      <Step n="5" place="top-[173px] left-[346px]" fill="#f2f1f7" />
    </Panel>
  );
}

export default function App() {
  return (
    <main className="flex h-[1000px] w-[2370px] gap-[15px] overflow-hidden bg-white font-['Inter',sans-serif]">
      <HomeScreen />
      <SettingsScreen />
      <HealthScreen />
      <SourcesScreen />
      <CubeScreen />
    </main>
  );
}
